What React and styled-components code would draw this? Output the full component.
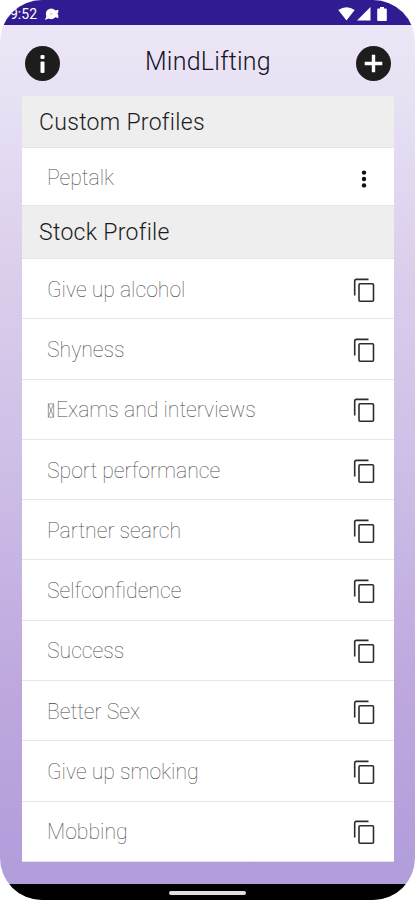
import styled, { createGlobalStyle } from "styled-components"

const GlobalStyle = createGlobalStyle`
    * {
        box-sizing: border-box;
    }
    body {
        margin: 0;
        background: #fff;
        font-family: Roboto, "Liberation Sans", sans-serif;
    }
`;

const Phone = styled.div`
    width: 415px;
    height: 900px;
    display: flex;
    flex-direction: column;
    overflow: hidden;
    border-radius: 42px;
    background: linear-gradient(180deg, #ece6f6 25px, #e6e0f4 110px, #dccfec 260px, #cfc1e7 440px, #bda7de 700px, #b19ddb 884px);
`;

const StatusBar = styled.div`
    height: 25px;
    flex: none;
    display: flex;
    align-items: center;
    justify-content: space-between;
    padding: 3px 26px 0 9px;
    background: #311b92;
    color: #fff;
`;

const StatusGroup = styled.div`
    display: flex;
    align-items: center;
    gap: ${({$gap}) => $gap}px;
`;

const Clock = styled.span`
    font-size: 14px;
    line-height: 20px;
    font-weight: 400;
    width: 28px;
    display: flex;
    justify-content: flex-end;
`;

const TopBar = styled.header`
    height: 71px;
    flex: none;
    display: flex;
    align-items: center;
    justify-content: space-between;
    padding: 6px 24px 0 25px;
`;

const Title = styled.h1`
    margin: 0 0 4px;
    font-size: 25px;
    line-height: 30px;
    font-weight: 360;
    letter-spacing: .25px;
    color: #17131f;
`;

const RoundButton = styled.button`
    width: 35px;
    height: 35px;
    padding: 0;
    border: 0;
    border-radius: 50%;
    background: #1d1d1d;
    display: flex;
    align-items: center;
    justify-content: center;
`;

const List = styled.main`
    flex: none;
    margin: 0 21px 0 22px;
    height: 766px;
    display: flex;
    flex-direction: column;
    background: #fff;
    border-bottom: 1px solid #e4e0ec;
`;

const SectionTitle = styled.h2`
    margin: 0;
    height: ${({$height}) => $height}px;
    flex: none;
    padding: 1px 17px 0;
    background: #eee;
    border-bottom: 1px solid #e4e4e4;
    font-size: 23px;
    line-height: 52px;
    font-weight: 360;
    letter-spacing: .3px;
    color: #1c1c1c;
`;

const Row = styled.div`
    flex: ${({$height}) => $height ? `0 0 ${$height}px` : '1 1 0'};
    display: flex;
    align-items: center;
    justify-content: space-between;
    padding: 0 19px 0 25px;
    border-bottom: 1px solid #e6e6e6;
    &:last-child {
        border-bottom: 0;
    }
`;

const RowLabel = styled.span`
    display: flex;
    align-items: center;
    padding-top: 2px;
    font-size: 21.2px;
    line-height: 28px;
    font-weight: 275;
    color: #484848;
`;

const MissingGlyph = styled.svg`
    width: 8px;
    height: 15px;
    margin-right: 1px;
`;

const CopySvg = styled.svg`
    width: 22px;
    height: 25px;
    margin-top: 3px;
`;

const MoreSvg = styled.svg`
    width: 6px;
    height: 18px;
    margin-right: 8px;
    margin-top: 4px;
`;

const BottomSpace = styled.div`
    flex: 1;
`;

const NavBar = styled.div`
    height: 16px;
    flex: none;
    display: flex;
    justify-content: center;
    padding-top: 7px;
    background: #000;
`;

const NavHandle = styled.div`
    width: 77px;
    height: 4px;
    border-radius: 2px;
    background: #e0e0e0;
`;

const profiles = [
    'Give up alcohol',
    'Shyness',
    'Exams and interviews',
    'Sport performance',
    'Partner search',
    'Selfconfidence',
    'Success',
    'Better Sex',
    'Give up smoking',
    'Mobbing',
];

const CopyIcon = () => (
    <CopySvg viewBox="0 0 22 25" fill="none" stroke="#2c2c2c" strokeWidth="1.6">
        <path d="M1.7 17.5V3Q1.7 1.4 3.3 1.4H15.5" />
        <rect x="6" y="5.7" width="14.5" height="17.6" rx="1" />
    </CopySvg>
);

const App = () => {
  return (
    <>
        <GlobalStyle />
        <Phone>
            <StatusBar>
                <StatusGroup $gap={7}>
                    <Clock>9:52</Clock>
                    <svg width="16" height="13" viewBox="0 0 16 13">
                        <circle cx="7.2" cy="5.8" r="5.4" fill="#fff" />
                        <path d="M3 7L.8 12l5-2zM11 2.5l3.3-.8v3.1l-1 1 1 1v3.4L11 9z" fill="#fff" />
                        <circle cx="7.2" cy="5.8" r="1.3" fill="#dcd7f0" />
                    </svg>
                </StatusGroup>
                <StatusGroup $gap={2}>
                    <svg width="17" height="14" viewBox="0 0 17 14">
                        <path d="M.3 3Q8.5 -2.6 16.7 3L8.5 13.6z" fill="#fff" />
                    </svg>
                    <svg width="14" height="14" viewBox="0 0 14 14">
                        <path d="M13.5 0V13.6H0z" fill="#fff" />
                    </svg>
                    <svg width="16" height="14" viewBox="0 0 16 14">
                        <path d="M5 1.5H7V0H11V1.5H13Q13.8 1.5 13.8 2.5V13Q13.8 14 13 14H5Q4.2 14 4.2 13V2.5Q4.2 1.5 5 1.5z" fill="#fff" />
                    </svg>
                </StatusGroup>
            </StatusBar>
            <TopBar>
                <RoundButton aria-label="Info">
                    <svg width="35" height="35" viewBox="0 0 35 35" fill="#fff">
                        <rect x="15.5" y="9" width="4" height="4" rx="1" />
                        <rect x="15.5" y="15.5" width="4" height="11.5" rx="1" />
                    </svg>
                </RoundButton>
                <Title>MindLifting</Title>
                <RoundButton aria-label="Add">
                    <svg width="35" height="35" viewBox="0 0 35 35" stroke="#fff" strokeWidth="3.4">
                        <path d="M17.5 8.7V26.3M8.7 17.5H26.3" />
                    </svg>
                </RoundButton>
            </TopBar>
            <List>
                <SectionTitle $height={52}>Custom Profiles</SectionTitle>
                <Row $height={58}>
                    <RowLabel>Peptalk</RowLabel>
                    <MoreSvg viewBox="0 0 6 18" fill="#111">
                        <circle cx="3" cy="2.6" r="2.2" />
                        <circle cx="3" cy="9" r="2.2" />
                        <circle cx="3" cy="15.4" r="2.2" />
                    </MoreSvg>
                </Row>
                <SectionTitle $height={53}>Stock Profile</SectionTitle>
                {profiles.map((name) => (
                    <Row key={name}>
                        <RowLabel>
                            {name.startsWith('Exams') && (
                                <MissingGlyph viewBox="0 0 9 16" fill="none" stroke="#777" strokeWidth=".8">
                                    <path d="M1.5 .5H7.5V15.5H1.5zM1.5 .5L7.5 15.5M7.5 .5L1.5 15.5" />
                                </MissingGlyph>
                            )}
                            {name}
                        </RowLabel>
                        <CopyIcon />
                    </Row>
                ))}
            </List>
            <BottomSpace />
            <NavBar>
                <NavHandle />
            </NavBar>
        </Phone>
    </>
  )
}

export default App
